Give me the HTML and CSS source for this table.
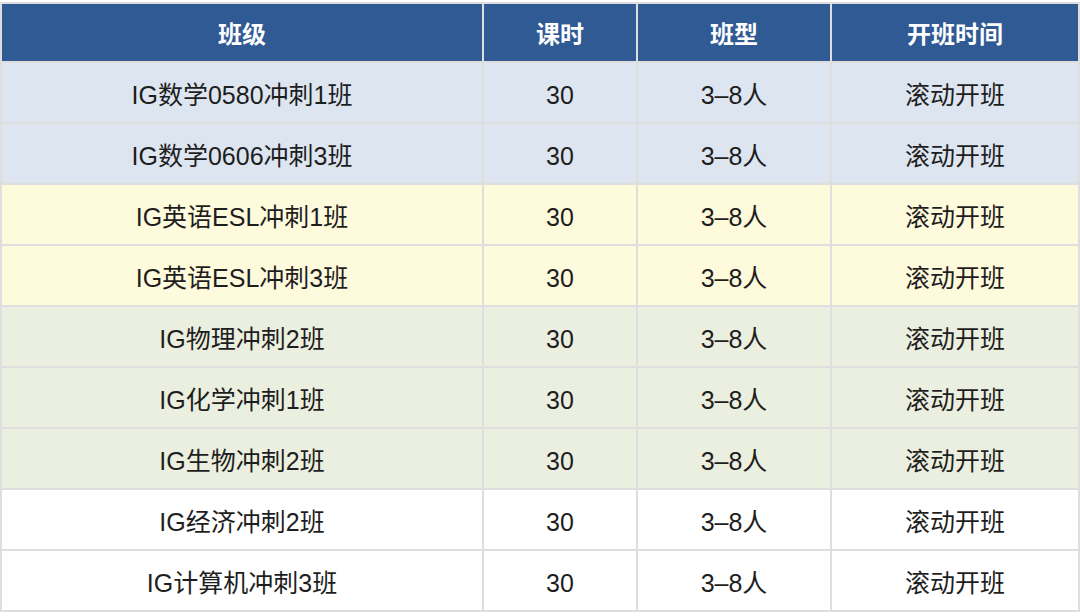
FILE: index.html
```
<!DOCTYPE html>
<html lang="zh-CN">
<head>
<meta charset="utf-8">
<link rel="stylesheet" href="styles.css">
</head>
<body>
<table class="course-table">
  <colgroup>
    <col class="c1"><col class="c2"><col class="c3"><col class="c4">
  </colgroup>
  <thead>
    <tr><th>班级</th><th>课时</th><th>班型</th><th>开班时间</th></tr>
  </thead>
  <tbody>
    <tr class="blue"><td>IG数学0580冲刺1班</td><td>30</td><td>3–8人</td><td>滚动开班</td></tr>
    <tr class="blue"><td>IG数学0606冲刺3班</td><td>30</td><td>3–8人</td><td>滚动开班</td></tr>
    <tr class="yellow"><td>IG英语ESL冲刺1班</td><td>30</td><td>3–8人</td><td>滚动开班</td></tr>
    <tr class="yellow"><td>IG英语ESL冲刺3班</td><td>30</td><td>3–8人</td><td>滚动开班</td></tr>
    <tr class="green"><td>IG物理冲刺2班</td><td>30</td><td>3–8人</td><td>滚动开班</td></tr>
    <tr class="green"><td>IG化学冲刺1班</td><td>30</td><td>3–8人</td><td>滚动开班</td></tr>
    <tr class="green"><td>IG生物冲刺2班</td><td>30</td><td>3–8人</td><td>滚动开班</td></tr>
    <tr class="white"><td>IG经济冲刺2班</td><td>30</td><td>3–8人</td><td>滚动开班</td></tr>
    <tr class="white"><td>IG计算机冲刺3班</td><td>30</td><td>3–8人</td><td>滚动开班</td></tr>
  </tbody>
</table>
</body>
</html>
```
FILE: styles.css
```
html, body {
  margin: 0;
  padding: 0;
  background: #ffffff;
}
body {
  padding-top: 2px;
  font-family: "Liberation Sans", "Noto Sans CJK SC", sans-serif;
}
.course-table {
  width: 1078px;
  table-layout: fixed;
  border-collapse: collapse;
  border: 2px solid #dedede;
}
.c1 { width: 482px; }
.c2 { width: 154px; }
.c3 { width: 194px; }
.c4 { width: 248px; }
.course-table th,
.course-table td {
  border: 2px solid #dedede;
  text-align: center;
  vertical-align: middle;
  padding: 4px 0 0;
  line-height: 30px;
}
.course-table th {
  height: 53px;
  background: #2f5a94;
  color: #ffffff;
  font-weight: bold;
  font-size: 24px;
}
.course-table td {
  height: 55px;
  color: #1e1e1e;
  font-size: 25px;
}
.blue td { background: #dde5f0; }
.yellow td { background: #fefadc; }
.green td { background: #ebefdf; }
.white td { background: #ffffff; }
```
